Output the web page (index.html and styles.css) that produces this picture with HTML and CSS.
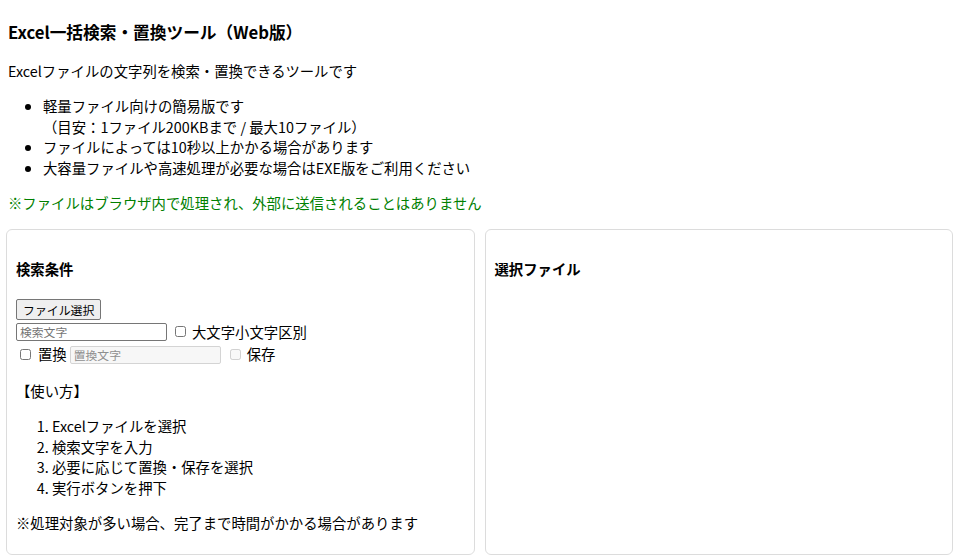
FILE: index.html
```html
<!DOCTYPE html>
<html lang="ja">
<head>
<meta charset="utf-8">
<title>Excel一括検索・置換ツール（Web版）</title>
<link rel="stylesheet" href="styles.css">
</head>
<body>
<header class="intro">
  <h3 class="title">Excel一括検索・置換ツール（Web版）</h3>
  <p class="lead">Excelファイルの文字列を検索・置換できるツールです</p>
  <ul class="notes">
    <li>軽量ファイル向けの簡易版です<br>（目安：1ファイル200KBまで / 最大10ファイル）</li>
    <li>ファイルによっては10秒以上かかる場合があります</li>
    <li>大容量ファイルや高速処理が必要な場合はEXE版をご利用ください</li>
  </ul>
  <p class="safe">※ファイルはブラウザ内で処理され、外部に送信されることはありません</p>
</header>

<main class="panels">
  <section class="card">
    <h4 class="card-title">検索条件</h4>
    <div class="row row-btn"><button class="btn" type="button">ファイル選択</button></div>
    <div class="row">
      <input class="text" type="text" placeholder="検索文字">
      <input class="chk chk-a" type="checkbox" id="case">
      <label class="lbl lbl-a" for="case">大文字小文字区別</label>
    </div>
    <div class="row row-3">
      <input class="chk chk-b" type="checkbox" id="rep">
      <label class="lbl lbl-b" for="rep">置換</label>
      <input class="text text-b" type="text" placeholder="置換文字" disabled>
      <input class="chk chk-c" type="checkbox" id="save" disabled>
      <label class="lbl lbl-c" for="save">保存</label>
    </div>
    <p class="howto">【使い方】</p>
    <ol class="steps">
      <li>Excelファイルを選択</li>
      <li>検索文字を入力</li>
      <li>必要に応じて置換・保存を選択</li>
      <li>実行ボタンを押下</li>
    </ol>
    <p class="warn">※処理対象が多い場合、完了まで時間がかかる場合があります</p>
  </section>
  <section class="card">
    <h4 class="card-title">選択ファイル</h4>
  </section>
</main>
</body>
</html>
```
FILE: styles.css
```css
html {
  background: #fff;
  overflow: hidden;
}
body {
  margin: 8px 3px 0 6px;
  font-family: "Noto Sans CJK JP", "Noto Sans", sans-serif;
  font-size: 14.36px;
  line-height: 20.8px;
  color: #000;
  background: #fff;
}
.intro {
  padding-left: 2px;
  padding-top: 11.6px;
}
.title {
  font-size: 16.7px;
  line-height: 24.3px;
  font-weight: 700;
  margin: 0 0 16.8px;
}
.lead {
  margin: 0 0 14.36px;
}
.notes {
  margin: 14.36px 0;
  padding-left: 35px;
}
.safe {
  margin: 14.36px 0;
  color: #008000;
}
.panels {
  display: flex;
  gap: 10px;
}
.card {
  flex: 1 1 0;
  border: 1px solid #dcdcdc;
  border-radius: 6px;
  padding: 10px 9px 5.5px 9px;
}
.card-title {
  font-size: 14.36px;
  font-weight: 700;
  margin: 19.1px 0;
}
.row {
  display: flex;
  align-items: center;
  height: 22.3px;
}
.row-btn {
  align-items: flex-start;
}
.row-3 {
  height: 23.1px;
}
.btn {
  font-family: "Noto Sans CJK JP", sans-serif;
  font-size: 11.9px;
  line-height: 17px;
  height: 21px;
  padding: 1px 6px;
  border: 1px solid #767676;
  border-radius: 2px;
  background: #efefef;
  color: #000;
  margin: 0;
}
.text {
  box-sizing: border-box;
  width: 151px;
  height: 18px;
  margin: 0;
  padding: 0 3px;
  border: 1px solid #767676;
  border-radius: 2px;
  font-family: "Noto Sans CJK JP", sans-serif;
  font-size: 11.8px;
  background: #fff;
}
.text::placeholder {
  color: #757575;
}
.text-b {
  margin-left: 3px;
}
.text:disabled {
  background: #f7f7f7;
  border-color: #d4d4d4;
}
.text:disabled::placeholder {
  color: #8f8f8f;
}
.chk {
  width: 11px;
  height: 11px;
  margin: 0;
}
.chk-a {
  margin-left: 8px;
}
.chk-b {
  margin-left: 4px;
}
.chk-c {
  margin-left: 9px;
}
.lbl-a, .lbl-c {
  margin-left: 6px;
}
.lbl-b {
  margin-left: 7px;
}
.howto {
  margin: 14.36px 0;
}
.steps {
  margin: 14.36px 0;
  padding-left: 36px;
}
.warn {
  margin: 14.36px 0;
}
```
